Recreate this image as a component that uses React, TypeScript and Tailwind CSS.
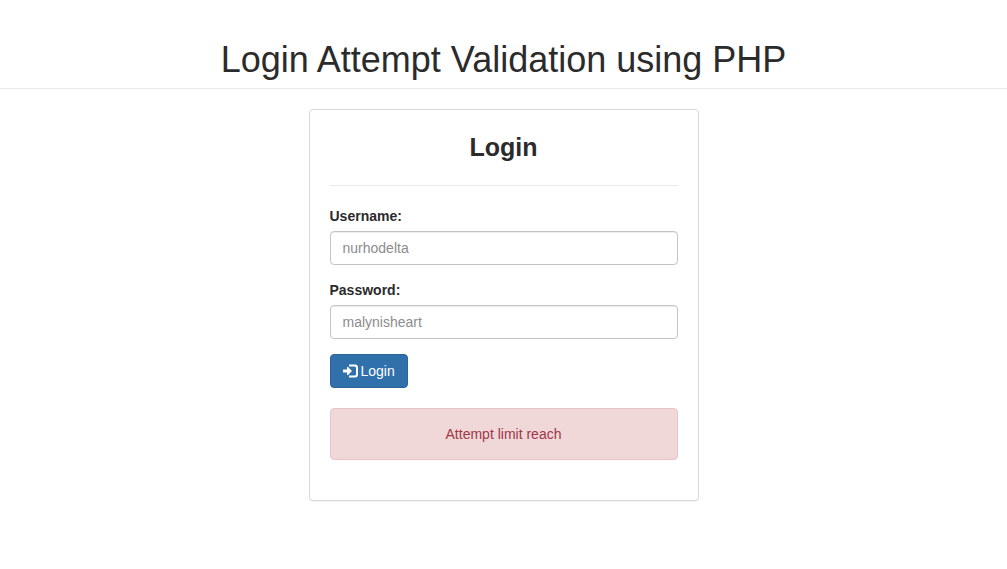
import { useState } from 'react';
import type { FormEvent } from 'react';

interface FieldProps {
  id: string;
  label: string;
  type?: string;
  placeholder: string;
  value: string;
  onChange: (value: string) => void;
}

const LogInIcon = () => (
  <svg viewBox="0 0 15 14" className="mr-[3px] h-3.5 w-[15px] shrink-0" fill="currentColor" aria-hidden="true">
    <path d="M4 3 H5 L9 7 L5 11 H4 V8.5 H0.5 Q0 8.5 0 8 V6 Q0 5.5 0.5 5.5 H4 Z" />
    <path d="M6 0.5 H12 Q15 0.5 15 3.5 V10.5 Q15 13.5 12 13.5 H6 V11.5 H11.5 Q13 11.5 13 10 V4 Q13 2.5 11.5 2.5 H6 Z" />
  </svg>
);

const Field = ({ id, label, type = 'text', placeholder, value, onChange }: FieldProps) => (
  <div className="mb-[15px]">
    <label htmlFor={id} className="mb-[5px] block font-bold">
      {label}
    </label>
    <input
      id={id}
      name={id}
      type={type}
      placeholder={placeholder}
      value={value}
      onChange={(e) => onChange(e.target.value)}
      className="block h-[34px] w-full rounded border border-[#c4c4c4] bg-white px-3 py-1.5 text-[#555] shadow-[inset_0_1px_1px_rgba(0,0,0,0.075)] outline-none placeholder:text-[#8c8c8c] focus:border-[#66afe9]"
    />
  </div>
);

const App = () => {
  const [username, setUsername] = useState('');
  const [password, setPassword] = useState('');

  const handleSubmit = (e: FormEvent) => {
    e.preventDefault();
  };

  return (
    <div className="min-h-screen bg-white pb-5 font-['Liberation_Sans',Arial,sans-serif] text-sm leading-5 text-[#2b2b2b]">
      <header className="mb-5 border-b border-[#eaeaea] pt-10 pb-[9px]">
        <h1 className="text-center text-4xl leading-[39px]">Login Attempt Validation using PHP</h1>
      </header>

      <main className="mx-auto w-full max-w-[390px]">
        <div className="rounded border border-[#d8d8d8] bg-white px-5 pt-5 pb-10 shadow-[0_1px_1px_rgba(0,0,0,0.05)]">
          <h2 className="text-center text-[25px] leading-[35px] font-bold">Login</h2>
          <hr className="my-5 border-[#eaeaea]" />
          <form onSubmit={handleSubmit}>
            <Field
              id="username"
              label="Username:"
              placeholder="nurhodelta"
              value={username}
              onChange={setUsername}
            />
            <Field
              id="password"
              label="Password:"
              type="password"
              placeholder="malynisheart"
              value={password}
              onChange={setPassword}
            />
            <button
              type="submit"
              className="flex h-[34px] items-center rounded border border-[#29649b] bg-[#3071ab] px-3 text-white"
            >
              <LogInIcon />
              Login
            </button>
          </form>
          <div role="alert" className="mt-5 rounded border border-[#e8c5cb] bg-[#f0d8d8] p-[15px] text-center text-[#a03648]">
            Attempt limit reach
          </div>
        </div>
      </main>
    </div>
  );
};

export default App;
